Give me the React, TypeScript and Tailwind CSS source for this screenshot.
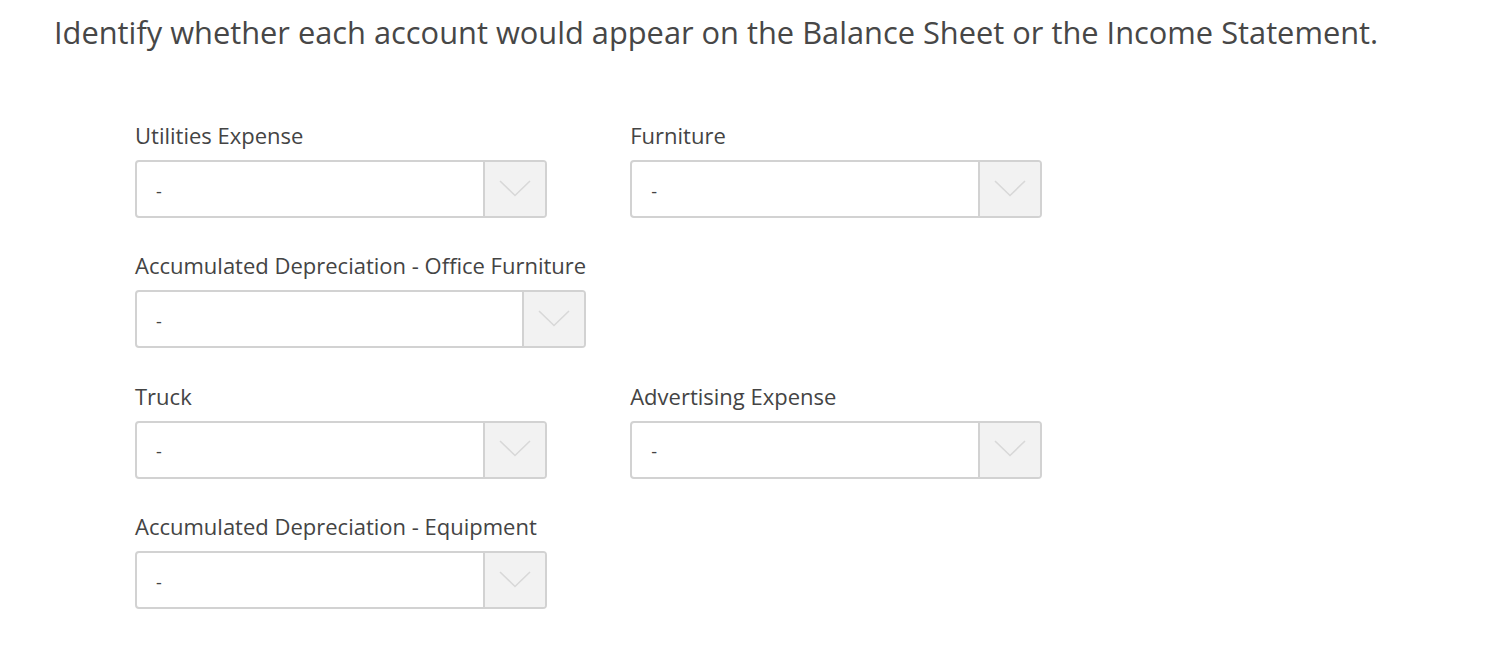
import React from "react";

type Field = { label: string } | null;

const fields: Field[] = [
  { label: "Utilities Expense" },
  { label: "Furniture" },
  { label: "Accumulated Depreciation - Office Furniture" },
  null,
  { label: "Truck" },
  { label: "Advertising Expense" },
  { label: "Accumulated Depreciation - Equipment" },
];

function Chevron() {
  return (
    <svg width="32" height="17" viewBox="0 0 32 17" fill="none" className="mb-[2px]">
      <path d="M1 1 L16 15.5 L31 1" stroke="#d8d8d8" strokeWidth="1.6" />
    </svg>
  );
}

function SelectField({ label }: { label: string }) {
  return (
    <div className="flex min-w-[412px] flex-col">
      <label className="whitespace-nowrap text-[22px] leading-[28px] text-[#444]">{label}</label>
      <div className="mt-[11px] flex h-[58px] w-full overflow-hidden rounded-[4px] border-2 border-[#d2d2d2] bg-white">
        <div className="flex flex-1 items-center pl-[19px] pt-[4px] text-[18px] text-[#444]">-</div>
        <div className="flex w-[62px] items-center justify-center border-l-2 border-[#d2d2d2] bg-[#f2f2f2]">
          <Chevron />
        </div>
      </div>
    </div>
  );
}

export default function App() {
  return (
    <div className="min-h-screen bg-white font-['Open_Sans',sans-serif] text-[#444]">
      <h1 className="pl-[54px] pt-[11px] text-[30.8px] leading-[42px] font-normal text-[#474747]">
        Identify whether each account would appear on the Balance Sheet or the Income Statement.
      </h1>
      <div className="mt-[68px] ml-[135px] grid w-fit grid-cols-[auto_auto] justify-items-start gap-x-[44px] gap-y-[33.4px]">
        {fields.map((f, i) => (f ? <SelectField key={i} label={f.label} /> : <div key={i} />))}
      </div>
    </div>
  );
}
